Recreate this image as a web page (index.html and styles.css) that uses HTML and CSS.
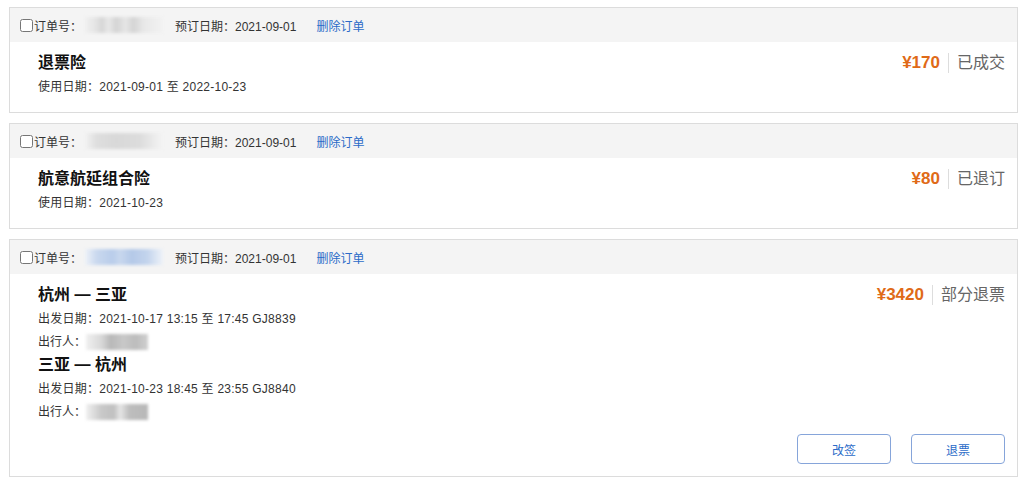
FILE: index.html
```html
<!DOCTYPE html>
<html lang="zh-CN">
<head>
<meta charset="utf-8">
<title>订单列表</title>
<link rel="stylesheet" href="styles.css">
</head>
<body>
<div class="list">
  <div class="card">
    <div class="card-head">
      <input type="checkbox" class="chk">
      <span class="label">订单号：</span>
      <span class="mask mask-gray"></span>
      <span class="date">预订日期：2021-09-01</span>
      <a class="del" href="#">删除订单</a>
    </div>
    <div class="card-body">
      <div class="info">
        <div class="title">退票险</div>
        <div class="line">使用日期：2021-09-01 至 2022-10-23</div>
      </div>
      <div class="side">
        <span class="price">¥170</span>
        <span class="status">已成交</span>
      </div>
    </div>
  </div>

  <div class="card">
    <div class="card-head">
      <input type="checkbox" class="chk">
      <span class="label">订单号：</span>
      <span class="mask mask-gray2"></span>
      <span class="date">预订日期：2021-09-01</span>
      <a class="del" href="#">删除订单</a>
    </div>
    <div class="card-body">
      <div class="info">
        <div class="title">航意航延组合险</div>
        <div class="line">使用日期：2021-10-23</div>
      </div>
      <div class="side">
        <span class="price">¥80</span>
        <span class="status">已退订</span>
      </div>
    </div>
  </div>

  <div class="card">
    <div class="card-head">
      <input type="checkbox" class="chk">
      <span class="label">订单号：</span>
      <span class="mask mask-blue"></span>
      <span class="date">预订日期：2021-09-01</span>
      <a class="del" href="#">删除订单</a>
    </div>
    <div class="card-body card-body-flight">
      <div class="info">
        <div class="title">杭州 — 三亚</div>
        <div class="line">出发日期：2021-10-17 13:15 至 17:45 GJ8839</div>
        <div class="pax">出行人：<span class="mask mask-pax"></span></div>
        <div class="title">三亚 — 杭州</div>
        <div class="line">出发日期：2021-10-23 18:45 至 23:55 GJ8840</div>
        <div class="pax">出行人：<span class="mask mask-pax2"></span></div>
      </div>
      <div class="side">
        <span class="price">¥3420</span>
        <span class="status">部分退票</span>
      </div>
    </div>
    <div class="card-foot">
      <button class="btn">改签</button>
      <button class="btn">退票</button>
    </div>
  </div>
</div>
</body>
</html>
```

FILE: styles.css
```css
html, body {
  margin: 0;
  padding: 0;
  background: #fff;
}
body {
  font-family: "Liberation Sans", "Noto Sans CJK SC", sans-serif;
  font-size: 12px;
  color: #333;
  padding: 7px 13px 0 9px;
}
.list {
  display: flex;
  flex-direction: column;
  gap: 10px;
}
.card {
  border: 1px solid #dcdcdc;
  background: #fff;
}
.card-head {
  height: 34px;
  background: #f4f4f4;
  display: flex;
  align-items: center;
  padding-left: 10px;
}
.chk {
  width: 13px;
  height: 13px;
  margin: 0 1px 0 0;
}
.label {
  color: #333;
}
.mask {
  display: inline-block;
  width: 78px;
  height: 16px;
  margin: 0 12px 0 3px;
  filter: blur(1.5px);
}
.mask-gray {
  background: linear-gradient(90deg, #f0f0f0 0, #e6e6e6 12%, #d6d6d6 22%, #e8e8e8 30%, #d4d4d4 40%, #e6e6e6 52%, #d4d4d4 62%, #e8e8e8 75%, #f2f2f2 100%);
}
.mask-gray2 {
  background: linear-gradient(90deg, #f2f2f2 0, #dedede 15%, #d8d8d8 40%, #dcdcdc 70%, #ececec 90%, #f4f4f4 100%);
}
.mask-blue {
  background: linear-gradient(90deg, #eef2f8 0, #c9d8ee 15%, #b9cdea 35%, #c8d7ee 45%, #b4c9e8 60%, #c3d4ed 80%, #eef2f8 100%);
}
.date {
  margin-right: 20px;
}
.del {
  color: #2b6bc8;
  text-decoration: none;
}
.card-body {
  display: flex;
  justify-content: space-between;
  align-items: flex-start;
  padding: 9px 12px 13px 28px;
}
.card-body-flight {
  padding-bottom: 0;
}
.title {
  font-size: 16px;
  font-weight: bold;
  color: #111;
  line-height: 24px;
}
.line {
  line-height: 24px;
  letter-spacing: 0.25px;
}
.pax {
  line-height: 22px;
  display: flex;
  align-items: center;
}
.mask-pax {
  width: 62px;
  height: 16px;
  margin: 0;
  background: linear-gradient(90deg, #f0f0f0 0, #d8d8d8 25%, #b8b8b8 40%, #c8c8c8 60%, #bcbcbc 80%, #d0d0d0 100%);
}
.mask-pax2 {
  width: 62px;
  height: 16px;
  margin: 0;
  background: linear-gradient(90deg, #f0f0f0 0, #c8c8c8 25%, #c0c0c0 45%, #e6e6e6 55%, #bdbdbd 70%, #b8b8b8 100%);
}
.side {
  display: flex;
  align-items: center;
  height: 24px;
}
.price {
  color: #e06a17;
  font-size: 17px;
  font-weight: bold;
  padding-right: 8px;
  border-right: 1px solid #ddd;
  line-height: 20px;
}
.status {
  font-size: 16px;
  color: #666;
  padding-left: 8px;
  line-height: 20px;
}
.card-foot {
  display: flex;
  justify-content: flex-end;
  gap: 20px;
  padding: 11px 12px 12px 0;
}
.btn {
  width: 94px;
  height: 30px;
  border: 1px solid #86a5da;
  border-radius: 4px;
  background: #fff;
  color: #2b6bc8;
  font-family: "Liberation Sans", "Noto Sans CJK SC", sans-serif;
  font-size: 12px;
  padding: 0;
}
```
